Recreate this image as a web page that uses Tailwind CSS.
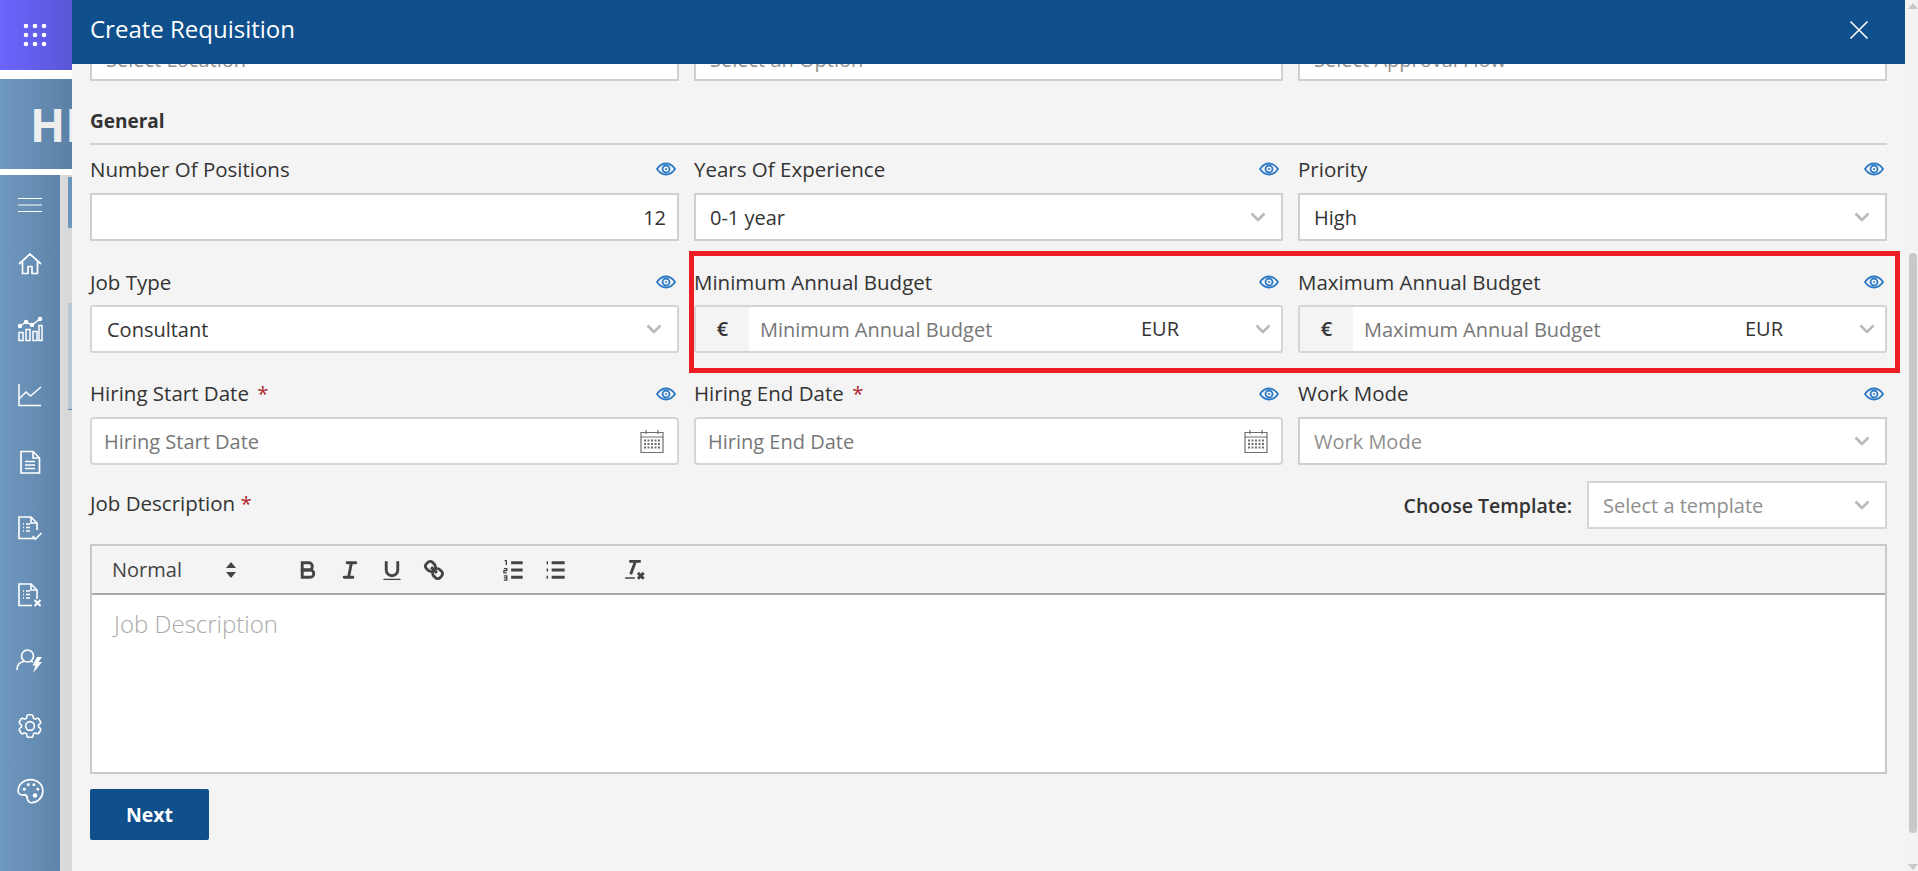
<!DOCTYPE html>
<html lang="en">
  <head>
    <meta charset="UTF-8" />
    <title>Create Requisition</title>
    <script src="https://cdn.jsdelivr.net/npm/@tailwindcss/browser@4"></script>
  </head>
  <body class="bg-[#f4f4f4] text-[#333] font-['Open_Sans',sans-serif] overflow-hidden">
    <div class="relative flex w-[1918px] h-[871px] overflow-hidden">
      <!-- app behind the drawer -->
      <div class="w-[72px] shrink-0 flex flex-col bg-white">
        <div class="h-[70px] flex items-center justify-center bg-gradient-to-r from-[#6a66ff] to-[#5a56d6] pr-[2px]">
          <svg class="w-[24px] h-[24px] text-white" viewBox="0 0 24 24" fill="currentColor">
            <circle cx="3" cy="3" r="2.3" /><circle cx="12" cy="3" r="2.3" /><circle cx="21" cy="3" r="2.3" />
            <circle cx="3" cy="12" r="2.3" /><circle cx="12" cy="12" r="2.3" /><circle cx="21" cy="12" r="2.3" />
            <circle cx="3" cy="21" r="2.3" /><circle cx="12" cy="21" r="2.3" /><circle cx="21" cy="21" r="2.3" />
          </svg>
        </div>
        <div class="mt-[9px] h-[90px] overflow-hidden flex items-center pl-[30px] bg-gradient-to-r from-[#7099bf] to-[#5b80a6]">
          <span class="text-[46px] font-bold text-[#eeeeee] whitespace-nowrap">HI</span>
        </div>
        <div class="mt-[6px] flex-1 flex bg-gradient-to-r from-[#e4e4e4] to-[#d8d8d8]">
          <div class="w-[60px] h-full flex flex-col items-center text-white bg-gradient-to-r from-[#7099bf] to-[#5f84aa]">
            <svg class="w-[24px] h-[24px] mt-[18px]" viewBox="0 0 24 24" fill="none" stroke="currentColor" stroke-width="1"><path d="M0 5.500h24M0 12h24M0 18.500h24" /></svg>
            <svg class="w-[24px] h-[24px] mt-[35px]" viewBox="0 0 24 24" fill="none" stroke="currentColor" stroke-width="1.700" stroke-linejoin="round"><path d="M1 12 12 2l11 10M4.500 9.500V21.500h5.500v-7h4v7h5.500V9.500" /></svg>
            <svg class="w-[26px] h-[26px] mt-[40px]" viewBox="0 0 26 26" fill="none" stroke="currentColor" stroke-width="1.500"><path d="M2 16.500h4v8H2zM9 13.500h4v11H9zM16 15.500h4v9h-4zM22 9.500h3v15h-3z" /><path d="M3 10l6-4 6 3 8-6" /><circle cx="3" cy="10" r="1.500" fill="currentColor" /><circle cx="9" cy="6" r="1.500" fill="currentColor" /><circle cx="15" cy="9" r="1.500" fill="currentColor" /><circle cx="23" cy="3" r="1.500" fill="currentColor" /></svg>
            <svg class="w-[24px] h-[24px] mt-[41px]" viewBox="0 0 24 24" fill="none" stroke="currentColor" stroke-width="1.500"><path d="M1 1v21.500h22" /><path d="M1 16l7-7 4.500 4L23 4" /></svg>
            <svg class="w-[24px] h-[24px] mt-[43px]" viewBox="0 0 24 24" fill="none" stroke="currentColor" stroke-width="1.700"><path d="M3 1.500h12l6.500 6.500v15H3zM15 1.500V8h6.500" /><path d="M7 11.500h10M7 15h10M7 18.500h10" /></svg>
            <svg class="w-[26px] h-[26px] mt-[41px]" viewBox="0 0 26 26" fill="none" stroke="currentColor" stroke-width="1.600"><path d="M18 23.500H2V2h12l6 6v7M14 2v6h6" /><path d="M6 9h1M9 9h4M6 12.500h1M9 12.500h4M6 16h1M9 16h4" /><path d="M15.500 21l3 3 6-6" /></svg>
            <svg class="w-[26px] h-[26px] mt-[41px]" viewBox="0 0 26 26" fill="none" stroke="currentColor" stroke-width="1.600"><path d="M15 23.500H2V2h12l6 6v9M14 2v6h6" /><path d="M6 9h1M9 9h4M6 12.500h1M9 12.500h4M6 16h1M9 16h4" /><path d="M17.500 18l6 6M23.500 18l-6 6" stroke-width="2" /></svg>
            <svg class="w-[28px] h-[26px] mt-[40px]" viewBox="0 0 28 26" fill="none" stroke="currentColor" stroke-width="1.700"><circle cx="11.500" cy="8" r="6" /><path d="M1 22c0-5 3-8 7-8.500M15 13.500l2 .5" /><path d="M21 9h5l-3.500 5H26L17 25l2.500-7.500H16.500z" fill="currentColor" stroke="none" /></svg>
            <svg class="w-[30px] h-[30px] mt-[37px]" viewBox="0 0 24 24" fill="none" stroke="currentColor" stroke-width="1.300" stroke-linejoin="round"><path d="M9.590 3.940c.09-.542.560-.94 1.110-.94h2.593c.550 0 1.020.398 1.110.940l.213 1.281c.063.374.313.686.645.870.074.040.147.083.220.127.325.196.720.257 1.075.124l1.217-.456a1.125 1.125 0 0 1 1.370.490l1.296 2.247a1.125 1.125 0 0 1-.260 1.431l-1.003.827c-.293.241-.438.613-.430.992a7.723 7.723 0 0 1 0 .255c-.008.378.137.750.430.991l1.004.827c.424.350.534.955.260 1.430l-1.298 2.247a1.125 1.125 0 0 1-1.369.491l-1.217-.456c-.355-.133-.750-.072-1.076.124a6.470 6.470 0 0 1-.220.128c-.331.183-.581.495-.644.869l-.213 1.281c-.090.543-.560.940-1.110.940h-2.594c-.550 0-1.019-.398-1.110-.940l-.213-1.281c-.062-.374-.312-.686-.644-.870a6.520 6.520 0 0 1-.220-.127c-.325-.196-.720-.257-1.076-.124l-1.217.456a1.125 1.125 0 0 1-1.369-.490l-1.297-2.247a1.125 1.125 0 0 1 .260-1.431l1.004-.827c.292-.240.437-.613.430-.991a6.932 6.932 0 0 1 0-.255c.007-.380-.138-.751-.430-.992l-1.004-.827a1.125 1.125 0 0 1-.260-1.430l1.297-2.247a1.125 1.125 0 0 1 1.370-.491l1.216.456c.356.133.751.072 1.076-.124.072-.044.146-.086.220-.128.332-.183.582-.495.644-.869l.214-1.280Z" /><circle cx="12" cy="12" r="3.500" /></svg>
            <svg class="w-[27px] h-[27px] mt-[37px]" viewBox="0 0 24 24" fill="none" stroke="currentColor" stroke-width="1.500"><path d="M12 1.500C6 1.500 1 6 1 11.500c0 2 1.500 3.500 3.500 3.500h2c1.500 0 2.500 1 2.500 2.500 0 1 .3 1.700.8 2.500.6 1 1.200 2 2.700 2 6 0 10.500-5 10.500-10.500S18 1.500 12 1.500Z" /><circle cx="6.500" cy="10" r="1.300" fill="currentColor" stroke="none" /><circle cx="10" cy="6" r="1.300" fill="currentColor" stroke="none" /><circle cx="15" cy="6" r="1.300" fill="currentColor" stroke="none" /><circle cx="18.500" cy="10" r="1.300" fill="currentColor" stroke="none" /><circle cx="16" cy="15.500" r="2" fill="currentColor" stroke="none" /></svg>
          </div>
          <div class="ml-[8px] w-[4px] flex flex-col">
            <div class="mt-[2px] h-[51px] bg-[#6d96bd]"></div>
            <div class="mt-[75px] h-[107px] bg-[#b9c6d6] border-b border-[#5f84aa]"></div>
          </div>
        </div>
      </div>

      <!-- drawer -->
      <div class="w-[1833px] shrink-0 flex flex-col h-full">
        <div class="relative z-10 h-[64px] shrink-0 flex items-center justify-between pl-[18px] pr-[36px] bg-[#0f4f8b] text-white">
          <h1 class="text-[24px] leading-[60px] pb-[7px]">Create Requisition</h1>
          <svg class="w-[20px] h-[20px] -mt-[4px]" viewBox="0 0 20 20" fill="none" stroke="currentColor" stroke-width="1.600"><path d="M1.500 1.500l17 17M18.500 1.500l-17 17" /></svg>
        </div>

        <div class="flex-1 px-[18px] overflow-hidden">
          <div class="grid grid-cols-3 gap-x-[15px] -mt-[31px] text-[#8f8f8f] text-[20px]">
            <div class="h-[48px] flex items-center px-[14px] pt-[6px] bg-white border-2 border-[#cfcfcf]">Select Location</div>
            <div class="h-[48px] flex items-center px-[14px] pt-[6px] bg-white border-2 border-[#cfcfcf]">Select an Option</div>
            <div class="h-[48px] flex items-center px-[14px] pt-[6px] bg-white border-2 border-[#cfcfcf]">Select Approval Flow</div>
          </div>

          <h2 class="mt-[24px] text-[19px] leading-[32px] font-bold">General</h2>
          <div class="mt-[6px] h-[2px] bg-[#d3d3d3]"></div>

          <!-- row 1 -->
          <div class="mt-[10px] grid grid-cols-3 gap-x-[15px]">
            <div>
              <div class="h-[38px] pb-[10px] flex items-center justify-between text-[20.5px] font-medium"><span>Number Of Positions</span><svg class="w-[20px] h-[14px] mr-[3px]" viewBox="0 0 20 14" fill="none" stroke="#2b78c5" stroke-width="1.800"><path d="M1 7c2.500-3.700 5.500-5.500 9-5.500s6.500 1.800 9 5.500c-2.500 3.700-5.500 5.500-9 5.500S3.500 10.700 1 7Z" /><circle cx="10" cy="7" r="3.500" /><circle cx="10" cy="7" r="1" fill="#2b78c5" stroke="none" /></svg></div>
              <div class="h-[48px] flex items-center justify-end pr-[11px] pt-[2px] bg-white border-2 border-[#cfcfcf] text-[20px]">12</div>
            </div>
            <div>
              <div class="h-[38px] pb-[10px] flex items-center justify-between text-[20.5px] font-medium"><span>Years Of Experience</span><svg class="w-[20px] h-[14px] mr-[4px]" viewBox="0 0 20 14" fill="none" stroke="#2b78c5" stroke-width="1.800"><path d="M1 7c2.500-3.700 5.500-5.500 9-5.500s6.500 1.800 9 5.500c-2.500 3.700-5.500 5.500-9 5.500S3.500 10.700 1 7Z" /><circle cx="10" cy="7" r="3.500" /><circle cx="10" cy="7" r="1" fill="#2b78c5" stroke="none" /></svg></div>
              <div class="h-[48px] flex items-center justify-between pl-[14px] pr-[15px] bg-white border-2 border-[#cfcfcf] text-[20px]"><span class="pt-[2px]">0-1 year</span><svg class="w-[16px] h-[10px] text-[#b9b9b9]" viewBox="0 0 16 10" fill="none" stroke="currentColor" stroke-width="2.600"><path d="M1.500 1.500 8 8l6.500-6.500" /></svg></div>
            </div>
            <div>
              <div class="h-[38px] pb-[10px] flex items-center justify-between text-[20.5px] font-medium"><span>Priority</span><svg class="w-[20px] h-[14px] mr-[3px]" viewBox="0 0 20 14" fill="none" stroke="#2b78c5" stroke-width="1.800"><path d="M1 7c2.500-3.700 5.500-5.500 9-5.500s6.500 1.800 9 5.500c-2.500 3.700-5.500 5.500-9 5.500S3.500 10.700 1 7Z" /><circle cx="10" cy="7" r="3.500" /><circle cx="10" cy="7" r="1" fill="#2b78c5" stroke="none" /></svg></div>
              <div class="h-[48px] flex items-center justify-between pl-[14px] pr-[15px] bg-white border-2 border-[#cfcfcf] text-[20px]"><span class="pt-[2px]">High</span><svg class="w-[16px] h-[10px] text-[#b9b9b9]" viewBox="0 0 16 10" fill="none" stroke="currentColor" stroke-width="2.600"><path d="M1.500 1.500 8 8l6.500-6.500" /></svg></div>
            </div>
          </div>

          <!-- row 2 -->
          <div class="mt-[24px] grid grid-cols-3 gap-x-[15px]">
            <div>
              <div class="h-[40px] pb-[6px] flex items-center justify-between text-[20.5px] font-medium"><span>Job Type</span><svg class="w-[20px] h-[14px] mr-[3px]" viewBox="0 0 20 14" fill="none" stroke="#2b78c5" stroke-width="1.800"><path d="M1 7c2.500-3.700 5.500-5.500 9-5.500s6.500 1.800 9 5.500c-2.500 3.700-5.500 5.500-9 5.500S3.500 10.700 1 7Z" /><circle cx="10" cy="7" r="3.500" /><circle cx="10" cy="7" r="1" fill="#2b78c5" stroke="none" /></svg></div>
              <div class="h-[48px] flex items-center justify-between px-[15px] bg-white border-2 border-[#d5d5d5] text-[20px] rounded-[3px]"><span class="pt-[2px]">Consultant</span><svg class="w-[16px] h-[10px] text-[#b9b9b9]" viewBox="0 0 16 10" fill="none" stroke="currentColor" stroke-width="2.600"><path d="M1.500 1.500 8 8l6.500-6.500" /></svg></div>
            </div>
            <div>
              <div class="h-[40px] pb-[6px] flex items-center justify-between text-[20.5px] font-medium"><span>Minimum Annual Budget</span><svg class="w-[20px] h-[14px] mr-[4px]" viewBox="0 0 20 14" fill="none" stroke="#2b78c5" stroke-width="1.800"><path d="M1 7c2.500-3.700 5.500-5.500 9-5.500s6.500 1.800 9 5.500c-2.500 3.700-5.500 5.500-9 5.500S3.500 10.700 1 7Z" /><circle cx="10" cy="7" r="3.500" /><circle cx="10" cy="7" r="1" fill="#2b78c5" stroke="none" /></svg></div>
              <div class="h-[48px] flex items-center bg-white border-2 border-[#d5d5d5] text-[20px] rounded-[3px] overflow-hidden">
                <span class="w-[53px] h-full flex items-center justify-center bg-[#f4f4f4] font-semibold">€</span>
                <span class="ml-[11px] w-[381px] pt-[2px] text-[#777]">Minimum Annual Budget</span>
                <span>EUR</span>
                <svg class="ml-auto mr-[10px] w-[16px] h-[10px] text-[#b9b9b9]" viewBox="0 0 16 10" fill="none" stroke="currentColor" stroke-width="2.600"><path d="M1.500 1.500 8 8l6.500-6.500" /></svg>
              </div>
            </div>
            <div>
              <div class="h-[40px] pb-[6px] flex items-center justify-between text-[20.5px] font-medium"><span>Maximum Annual Budget</span><svg class="w-[20px] h-[14px] mr-[3px]" viewBox="0 0 20 14" fill="none" stroke="#2b78c5" stroke-width="1.800"><path d="M1 7c2.500-3.700 5.500-5.500 9-5.500s6.500 1.800 9 5.500c-2.500 3.700-5.500 5.500-9 5.500S3.500 10.700 1 7Z" /><circle cx="10" cy="7" r="3.500" /><circle cx="10" cy="7" r="1" fill="#2b78c5" stroke="none" /></svg></div>
              <div class="h-[48px] flex items-center bg-white border-2 border-[#d5d5d5] text-[20px] rounded-[3px] overflow-hidden">
                <span class="w-[53px] h-full flex items-center justify-center bg-[#f4f4f4] font-semibold">€</span>
                <span class="ml-[11px] w-[381px] pt-[2px] text-[#777]">Maximum Annual Budget</span>
                <span>EUR</span>
                <svg class="ml-auto mr-[10px] w-[16px] h-[10px] text-[#b9b9b9]" viewBox="0 0 16 10" fill="none" stroke="currentColor" stroke-width="2.600"><path d="M1.500 1.500 8 8l6.500-6.500" /></svg>
              </div>
            </div>
          </div>

          <!-- row 3 -->
          <div class="mt-[21px] grid grid-cols-3 gap-x-[15px]">
            <div>
              <div class="h-[43px] pb-[4px] flex items-center justify-between text-[20.5px] font-medium"><span>Hiring Start Date <span class="ml-[3px] text-[#b3262c]">*</span></span><svg class="w-[20px] h-[14px] mr-[3px]" viewBox="0 0 20 14" fill="none" stroke="#2b78c5" stroke-width="1.800"><path d="M1 7c2.500-3.700 5.500-5.500 9-5.500s6.500 1.800 9 5.500c-2.500 3.700-5.500 5.500-9 5.500S3.500 10.700 1 7Z" /><circle cx="10" cy="7" r="3.500" /><circle cx="10" cy="7" r="1" fill="#2b78c5" stroke="none" /></svg></div>
              <div class="h-[48px] flex items-center justify-between pl-[12px] pr-[13px] bg-white border-2 border-[#d5d5d5] text-[20px] text-[#777] rounded-[4px]"><span class="pt-[2px]">Hiring Start Date</span><svg class="w-[24px] h-[24px] text-[#6f6f6f]" viewBox="0 0 24 24" fill="none" stroke="currentColor" stroke-width="1.200"><path d="M1 3.500h22v20H1zM1 8h22M6 1v4M18 1v4" /><path d="M4 11.500h16M4 15h16M4 18.500h16" stroke-dasharray="2 1.500" stroke-width="1.800" /></svg></div>
            </div>
            <div>
              <div class="h-[43px] pb-[4px] flex items-center justify-between text-[20.5px] font-medium"><span>Hiring End Date <span class="ml-[3px] text-[#b3262c]">*</span></span><svg class="w-[20px] h-[14px] mr-[4px]" viewBox="0 0 20 14" fill="none" stroke="#2b78c5" stroke-width="1.800"><path d="M1 7c2.500-3.700 5.500-5.500 9-5.500s6.500 1.800 9 5.500c-2.500 3.700-5.500 5.500-9 5.500S3.500 10.700 1 7Z" /><circle cx="10" cy="7" r="3.500" /><circle cx="10" cy="7" r="1" fill="#2b78c5" stroke="none" /></svg></div>
              <div class="h-[48px] flex items-center justify-between pl-[12px] pr-[13px] bg-white border-2 border-[#d5d5d5] text-[20px] text-[#777] rounded-[4px]"><span class="pt-[2px]">Hiring End Date</span><svg class="w-[24px] h-[24px] text-[#6f6f6f]" viewBox="0 0 24 24" fill="none" stroke="currentColor" stroke-width="1.200"><path d="M1 3.500h22v20H1zM1 8h22M6 1v4M18 1v4" /><path d="M4 11.500h16M4 15h16M4 18.500h16" stroke-dasharray="2 1.500" stroke-width="1.800" /></svg></div>
            </div>
            <div>
              <div class="h-[43px] pb-[4px] flex items-center justify-between text-[20.5px] font-medium"><span>Work Mode</span><svg class="w-[20px] h-[14px] mr-[3px]" viewBox="0 0 20 14" fill="none" stroke="#2b78c5" stroke-width="1.800"><path d="M1 7c2.500-3.700 5.500-5.500 9-5.500s6.500 1.800 9 5.500c-2.500 3.700-5.500 5.500-9 5.500S3.500 10.700 1 7Z" /><circle cx="10" cy="7" r="3.500" /><circle cx="10" cy="7" r="1" fill="#2b78c5" stroke="none" /></svg></div>
              <div class="h-[48px] flex items-center justify-between pl-[14px] pr-[15px] bg-white border-2 border-[#cfcfcf] text-[20px] text-[#8f8f8f]"><span class="pt-[2px]">Work Mode</span><svg class="w-[16px] h-[10px] text-[#b9b9b9]" viewBox="0 0 16 10" fill="none" stroke="currentColor" stroke-width="2.600"><path d="M1.500 1.500 8 8l6.500-6.500" /></svg></div>
            </div>
          </div>

          <!-- job description -->
          <div class="mt-[16px] flex justify-between h-[48px]">
            <span class="text-[20.5px] leading-[44px] font-medium">Job Description <span class="text-[#b3262c]">*</span></span>
            <div class="flex items-center gap-[15px]">
              <span class="pt-[2px] text-[19.5px] font-semibold">Choose Template:</span>
              <div class="w-[300px] h-[48px] flex items-center justify-between pl-[14px] pr-[15px] bg-white border-2 border-[#d5d5d5] text-[20px] text-[#8f8f8f]"><span class="pt-[2px]">Select a template</span><svg class="w-[16px] h-[10px] text-[#b9b9b9]" viewBox="0 0 16 10" fill="none" stroke="currentColor" stroke-width="2.600"><path d="M1.500 1.500 8 8l6.500-6.500" /></svg></div>
            </div>
          </div>

          <div class="mt-[15px] border-2 border-[#c9c9c9]">
            <div class="h-[47px] flex items-center pl-[20px] text-[#444] text-[20px] font-medium">
              <span class="w-[112px]">Normal</span>
              <svg class="w-[14px] h-[20px]" viewBox="0 0 14 20" fill="#444"><path d="M7 2l5 6H2zM7 18l-5-6h10z" /></svg>
              <svg class="ml-[57px] w-[26px] h-[26px]" viewBox="0 0 18 18" fill="none" stroke="currentColor" stroke-width="2"><path d="M5,4H9.500A2.500,2.500,0,0,1,12,6.500v0A2.500,2.500,0,0,1,9.500,9H5V4Z" /><path d="M5,9h5.500A2.500,2.500,0,0,1,13,11.500v0A2.500,2.500,0,0,1,10.500,14H5V9Z" /></svg>
              <svg class="ml-[16px] w-[26px] h-[26px]" viewBox="0 0 18 18" fill="none" stroke="currentColor" stroke-width="2" stroke-linecap="round"><path d="M7 4h6M5 14h6M8 14l2-10" /></svg>
              <svg class="ml-[16px] w-[26px] h-[26px]" viewBox="0 0 18 18" fill="none" stroke="currentColor" stroke-width="2"><path d="M5,3V9a4,4,0,0,0,4,4H9a4,4,0,0,0,4-4V3" /><rect x="3" y="15" width="12" height="1" rx=".5" fill="currentColor" stroke-width="0" /></svg>
              <svg class="ml-[16px] w-[26px] h-[26px]" viewBox="0 0 18 18" fill="none" stroke="currentColor" stroke-width="2"><path d="M7 7l4 4" /><path d="M8.900,4.577a3.476,3.476,0,0,1,.36,4.679A3.476,3.476,0,0,1,4.577,8.900C3.185,7.500,2.035,6.400,4.217,4.217S7.500,3.185,8.900,4.577Z" /><path d="M13.423,9.100a3.476,3.476,0,0,0-4.679-.36,3.476,3.476,0,0,0,.36,4.679c1.392,1.392,2.500,2.542,4.679.36S14.815,10.500,13.423,9.100Z" /></svg>
              <svg class="ml-[54px] w-[26px] h-[26px]" viewBox="0 0 18 18" fill="none" stroke="currentColor" stroke-width="2"><path d="M7 4h8M7 9h8M7 14h8" /><path d="M2.500 2.500h1.200v3M2 8h2v1.500H2v1.500h2M2 13h2v3H2M2 14.500h2" stroke-width=".9" /></svg>
              <svg class="ml-[16px] w-[26px] h-[26px]" viewBox="0 0 18 18" fill="none" stroke="currentColor" stroke-width="2"><path d="M6 4h9M6 9h9M6 14h9M2.500 4h1M2.500 9h1M2.500 14h1" /></svg>
              <svg class="ml-[53px] w-[26px] h-[26px]" viewBox="0 0 18 18" fill="none" stroke="currentColor" stroke-width="2"><path d="M5 3h8M6 12l3.350-9M11 11l4 4M15 11l-4 4" /><rect x="2" y="14" width="7" height="1" rx=".5" fill="currentColor" stroke-width="0" /></svg>
            </div>
            <div class="h-[179px] bg-white border-t-2 border-[#a8a8a8] pl-[22px] pt-[11px] text-[24px] font-light text-[#aaa]">Job Description</div>
          </div>

          <button class="mt-[15px] w-[119px] h-[51px] bg-[#0f4f8b] text-white text-[19.5px] font-bold rounded-[2px]">Next</button>
        </div>
      </div>

      <!-- scrollbar -->
      <div class="w-[13px] shrink-0 bg-[#f4f2f2] flex flex-col items-center pl-[2px] pt-[3px]">
        <div class="w-0 h-0 border-x-[5px] border-x-transparent border-b-[6px] border-b-[#c8c8c8]"></div>
        <div class="mt-[244px] w-[8px] h-[580px] rounded-full bg-[#c8c8c8]"></div>
        <div class="mt-[31px] w-0 h-0 border-x-[5px] border-x-transparent border-t-[6px] border-t-[#c8c8c8]"></div>
      </div>

      <!-- highlight drawn over the form -->
      <div class="absolute left-[689px] top-[251px] w-[1211px] h-[122px] border-[5px] border-[#ed1c24]"></div>
    </div>
  </body>
</html>
